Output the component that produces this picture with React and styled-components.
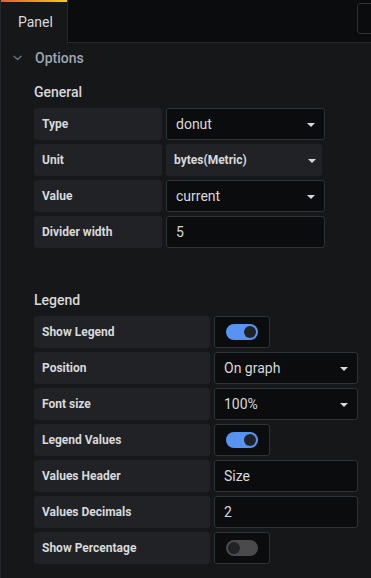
import React from "react";
import styled, { createGlobalStyle } from "styled-components";

const Global = createGlobalStyle`
  html, body { margin: 0; padding: 0; background: #161719; }
  body { font-family: Roboto, "Liberation Sans", sans-serif; }
  * { box-sizing: border-box; }
`;

const Page = styled.div`
  width: 371px;
  height: 578px;
  background: #161719;
  display: flex;
  flex-direction: column;
  overflow: hidden;
`;

const TopBar = styled.div`
  height: 43px;
  background: #0b0c0e;
  display: flex;
  align-items: stretch;
  justify-content: space-between;
  border-bottom: 1px solid #25272b;
`;

const Tab = styled.div`
  width: 68px;
  background: #161719;
  border-left: 1px solid #25272b;
  border-right: 1px solid #25272b;
  margin-bottom: -1px;
  display: flex;
  flex-direction: column;
  color: #d8d9da;
  font-size: 14px;
  &::before {
    content: "";
    height: 2px;
    background: linear-gradient(90deg, #f05a28, #fbca0a);
  }
`;

const TabLabel = styled.div`
  flex: 1;
  display: flex;
  align-items: center;
  padding-left: 17px;
  padding-bottom: 2px;
`;

const CornerBox = styled.div`
  width: 20px;
  height: 31px;
  margin-top: 3px;
  margin-right: -6px;
  border: 1px solid #2c3235;
  border-radius: 3px;
`;

const Body = styled.div`
  flex: 1;
  border-left: 1px solid #25272b;
  display: flex;
  flex-direction: column;
`;

const SectionHeader = styled.div`
  height: 30px;
  display: flex;
  align-items: center;
  color: #9fa7b3;
  font-size: 14px;
  font-weight: 500;
  padding-left: 12px;
  gap: 13px;
`;

const Group = styled.div`
  padding-left: 33px;
  display: flex;
  flex-direction: column;
  gap: 4px;
  margin-top: ${(p) => p.$top}px;
`;

const GroupTitle = styled.div`
  color: #d8d9da;
  font-size: 14px;
  font-weight: 500;
  height: 16px;
  line-height: 16px;
  margin-bottom: 4px;
`;

const Row = styled.div`
  display: flex;
  gap: 4px;
  height: 32px;
`;

const Label = styled.div`
  width: ${(p) => p.$w}px;
  background: #202226;
  border-radius: 3px;
  display: flex;
  align-items: center;
  padding-left: 8px;
  color: #d8d9da;
  font-size: 12px;
  font-weight: 700;
`;

const Field = styled.div`
  width: ${(p) => p.$w}px;
  background: #0b0c0e;
  border: 1px solid #2c3235;
  border-radius: 3px;
  display: flex;
  align-items: center;
  justify-content: space-between;
  padding: 0 9px 0 9px;
  color: #d8d9da;
  font-size: 14px;
`;

const FlatSelect = styled.div`
  width: ${(p) => p.$w}px;
  background: #202226;
  border-radius: 3px;
  display: flex;
  align-items: center;
  justify-content: space-between;
  padding: 0 6px 0 8px;
  color: #d8d9da;
  font-size: 12px;
  font-weight: 700;
`;

const Caret = styled.span`
  width: 0;
  height: 0;
  border-left: 4px solid transparent;
  border-right: 4px solid transparent;
  border-top: 4px solid #d8d9da;
  margin-top: 1px;
`;

const SwitchBox = styled.div`
  width: 56px;
  background: #0b0c0e;
  border: 1px solid #2c3235;
  border-radius: 3px;
  display: flex;
  align-items: center;
  justify-content: center;
`;

const Track = styled.div`
  width: 32px;
  height: 16px;
  border-radius: 8px;
  background: ${(p) => (p.$on ? "#5794f2" : "#4a4a4d")};
  display: flex;
  align-items: center;
  justify-content: ${(p) => (p.$on ? "flex-end" : "flex-start")};
  padding: 0 2px;
`;

const Knob = styled.div`
  width: 12px;
  height: 12px;
  border-radius: 50%;
  background: #202226;
`;

const Chevron = () => (
  <svg width="9" height="6" viewBox="0 0 9 6" fill="none">
    <path d="M1 1.2 L4.5 4.5 L8 1.2" stroke="#6e7580" strokeWidth="1.3" strokeLinecap="round" strokeLinejoin="round" />
  </svg>
);

const Switch = ({ on }) => (
  <SwitchBox>
    <Track $on={on}>
      <Knob />
    </Track>
  </SwitchBox>
);

export default function App() {
  return (
    <Page>
      <Global />
      <TopBar>
        <Tab>
          <TabLabel>Panel</TabLabel>
        </Tab>
        <CornerBox />
      </TopBar>
      <Body>
        <SectionHeader>
          <Chevron />
          <span>Options</span>
        </SectionHeader>
        <Group $top={11}>
          <GroupTitle>General</GroupTitle>
          <Row>
            <Label $w={128}>Type</Label>
            <Field $w={159}>donut<Caret /></Field>
          </Row>
          <Row>
            <Label $w={128}>Unit</Label>
            <FlatSelect $w={156}>bytes(Metric)<Caret /></FlatSelect>
          </Row>
          <Row>
            <Label $w={128}>Value</Label>
            <Field $w={159}>current<Caret /></Field>
          </Row>
          <Row>
            <Label $w={128}>Divider width</Label>
            <Field $w={159}>5</Field>
          </Row>
        </Group>
        <Group $top={44}>
          <GroupTitle>Legend</GroupTitle>
          <Row>
            <Label $w={176}>Show Legend</Label>
            <Switch on />
          </Row>
          <Row>
            <Label $w={176}>Position</Label>
            <Field $w={144}>On graph<Caret /></Field>
          </Row>
          <Row>
            <Label $w={176}>Font size</Label>
            <Field $w={144}>100%<Caret /></Field>
          </Row>
          <Row>
            <Label $w={176}>Legend Values</Label>
            <Switch on />
          </Row>
          <Row>
            <Label $w={176}>Values Header</Label>
            <Field $w={144}>Size</Field>
          </Row>
          <Row>
            <Label $w={176}>Values Decimals</Label>
            <Field $w={144}>2</Field>
          </Row>
          <Row>
            <Label $w={176}>Show Percentage</Label>
            <Switch />
          </Row>
        </Group>
      </Body>
    </Page>
  );
}
